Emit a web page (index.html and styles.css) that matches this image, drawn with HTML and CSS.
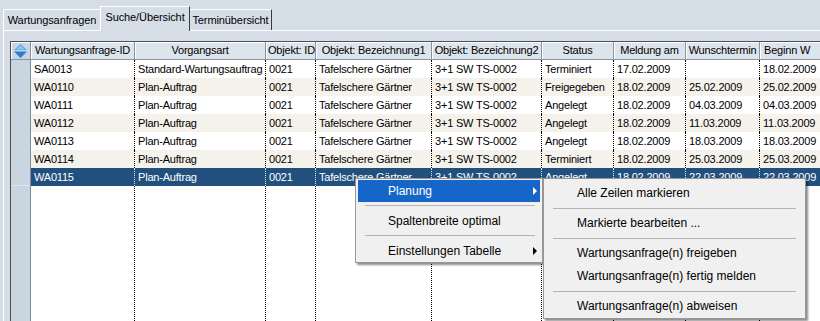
FILE: index.html
```html
<!DOCTYPE html>
<html lang="de">
<head>
  <meta charset="UTF-8" />
  <title>Wartungsanfragen - Suche/Übersicht</title>
  <link rel="stylesheet" href="styles.css">
</head>
<body>
  <div class="tabs">
    <div class="tab tab-first">Wartungsanfragen</div>
    <div class="tab tab-active">Suche/Übersicht</div>
    <div class="tab tab-last">Terminübersicht</div>
  </div>

  <div class="panel">
    <div class="table">
      <div class="row head">
        <div class="cell gutter corner">
          <svg width="13" height="14" viewBox="0 0 13 14">
            <polygon points="6.5,0 13,6 0,6" fill="#5aa8f0"/>
            <polygon points="0,7.5 13,7.5 6.5,14" fill="#2d7bd4"/>
            <polygon points="6.5,1.5 10.5,5.2 2.5,5.2" fill="#8cc6f7"/>
          </svg>
        </div>
        <div class="cell">Wartungsanfrage-ID</div>
        <div class="cell">Vorgangsart</div>
        <div class="cell">Objekt: ID</div>
        <div class="cell">Objekt: Bezeichnung1</div>
        <div class="cell">Objekt: Bezeichnung2</div>
        <div class="cell">Status</div>
        <div class="cell">Meldung am</div>
        <div class="cell">Wunschtermin</div>
        <div class="cell left">Beginn W</div>
      </div>

      <div class="row">
        <div class="cell gutter"></div>
        <div class="cell">SA0013</div>
        <div class="cell">Standard-Wartungsauftrag</div>
        <div class="cell">0021</div>
        <div class="cell">Tafelschere Gärtner</div>
        <div class="cell">3+1 SW TS-0002</div>
        <div class="cell">Terminiert</div>
        <div class="cell">17.02.2009</div>
        <div class="cell"></div>
        <div class="cell">18.02.2009</div>
      </div>
      <div class="row alt">
        <div class="cell gutter"></div>
        <div class="cell">WA0110</div>
        <div class="cell">Plan-Auftrag</div>
        <div class="cell">0021</div>
        <div class="cell">Tafelschere Gärtner</div>
        <div class="cell">3+1 SW TS-0002</div>
        <div class="cell">Freigegeben</div>
        <div class="cell">18.02.2009</div>
        <div class="cell">25.02.2009</div>
        <div class="cell">25.02.2009</div>
      </div>
      <div class="row">
        <div class="cell gutter"></div>
        <div class="cell">WA0111</div>
        <div class="cell">Plan-Auftrag</div>
        <div class="cell">0021</div>
        <div class="cell">Tafelschere Gärtner</div>
        <div class="cell">3+1 SW TS-0002</div>
        <div class="cell">Angelegt</div>
        <div class="cell">18.02.2009</div>
        <div class="cell">04.03.2009</div>
        <div class="cell">04.03.2009</div>
      </div>
      <div class="row alt">
        <div class="cell gutter"></div>
        <div class="cell">WA0112</div>
        <div class="cell">Plan-Auftrag</div>
        <div class="cell">0021</div>
        <div class="cell">Tafelschere Gärtner</div>
        <div class="cell">3+1 SW TS-0002</div>
        <div class="cell">Angelegt</div>
        <div class="cell">18.02.2009</div>
        <div class="cell">11.03.2009</div>
        <div class="cell">11.03.2009</div>
      </div>
      <div class="row">
        <div class="cell gutter"></div>
        <div class="cell">WA0113</div>
        <div class="cell">Plan-Auftrag</div>
        <div class="cell">0021</div>
        <div class="cell">Tafelschere Gärtner</div>
        <div class="cell">3+1 SW TS-0002</div>
        <div class="cell">Angelegt</div>
        <div class="cell">18.02.2009</div>
        <div class="cell">18.03.2009</div>
        <div class="cell">18.03.2009</div>
      </div>
      <div class="row alt">
        <div class="cell gutter"></div>
        <div class="cell">WA0114</div>
        <div class="cell">Plan-Auftrag</div>
        <div class="cell">0021</div>
        <div class="cell">Tafelschere Gärtner</div>
        <div class="cell">3+1 SW TS-0002</div>
        <div class="cell">Terminiert</div>
        <div class="cell">18.02.2009</div>
        <div class="cell">25.03.2009</div>
        <div class="cell">25.03.2009</div>
      </div>
      <div class="row selected">
        <div class="cell gutter"></div>
        <div class="cell">WA0115</div>
        <div class="cell">Plan-Auftrag</div>
        <div class="cell">0021</div>
        <div class="cell">Tafelschere Gärtner</div>
        <div class="cell">3+1 SW TS-0002</div>
        <div class="cell">Angelegt</div>
        <div class="cell">18.02.2009</div>
        <div class="cell">22.03.2009</div>
        <div class="cell">22.03.2009</div>
      </div>

      <!-- empty space below the last row keeps the column lines -->
      <div class="row filler">
        <div class="cell gutter"></div>
        <div class="cell"></div>
        <div class="cell"></div>
        <div class="cell"></div>
        <div class="cell"></div>
        <div class="cell"></div>
        <div class="cell"></div>
        <div class="cell"></div>
        <div class="cell"></div>
        <div class="cell"></div>
      </div>
    </div>
  </div>

  <div class="menu menu-main">
    <div class="item active">Planung<span class="arrow"></span></div>
    <div class="sep"></div>
    <div class="item">Spaltenbreite optimal</div>
    <div class="sep"></div>
    <div class="item">Einstellungen Tabelle<span class="arrow"></span></div>
  </div>

  <div class="menu menu-sub">
    <div class="item">Alle Zeilen markieren</div>
    <div class="sep"></div>
    <div class="item">Markierte bearbeiten ...</div>
    <div class="sep"></div>
    <div class="item">Wartungsanfrage(n) freigeben</div>
    <div class="item">Wartungsanfrage(n) fertig melden</div>
    <div class="sep"></div>
    <div class="item">Wartungsanfrage(n) abweisen</div>
  </div>
</body>
</html>
```

FILE: styles.css
```css
* {
  box-sizing: border-box;
}
body {
  margin: 0;
  width: 820px;
  height: 321px;
  overflow: hidden;
  display: flex;
  flex-direction: column;
  background: #d5dee7;
  font-family: "Liberation Sans", Arial, sans-serif;
  font-size: 11px;
  color: #000;
}

/* tabs */
.tabs {
  display: flex;
  align-items: flex-end;
  height: 30px;
  padding-left: 3px;
  flex: none;
  letter-spacing: -0.1px;
}
.tab {
  height: 21px;
  line-height: 20px;
  text-align: center;
  white-space: nowrap;
  border-top: 1px solid #fff;
  border-left: 1px solid #fff;
  border-right: 1px solid #3c3c3c;
  background: #d5dee7;
}
.tab-first {
  width: 97px;
  border-right: none;
}
.tab-active {
  width: 90px;
  height: 25px;
  line-height: 21px;
  margin-bottom: -1px;
  position: relative;
  z-index: 1;
}
.tab-last {
  width: 82px;
  border-left: none;
}

/* panel + table */
.panel {
  flex: 1;
  min-height: 0;
  display: flex;
  margin-left: 3px;
  padding: 10px 0 0 6px;
  border-top: 1px solid #fff;
  border-left: 1px solid #fff;
}
.table {
  flex: 1;
  min-width: 0;
  display: flex;
  flex-direction: column;
  overflow: hidden;
  background: #fff;
  border-top: 1px solid #4e4e4e;
  border-left: 1px solid #4e4e4e;
  letter-spacing: -0.2px;
}
.row {
  flex: none;
  display: grid;
  grid-template-columns: 20px 104px 131px 50px 116px 110px 72px 72px 74px 61px;
  height: 18px;
}
.cell {
  padding: 0 3px;
  line-height: 18px;
  white-space: nowrap;
  overflow: hidden;
  border-right: 1px dotted #000;
}
.row .cell:last-child {
  border-right: none;
}
.gutter {
  background: #c9d5e0;
  border-right: 1px solid #7f8b96;
}
.row.alt {
  background: #f5f2ec;
}
.row.selected {
  background: #22507e;
  color: #fff;
}
.row.selected .cell {
  border-right-color: #e6e6e6;
}
.row.selected .gutter {
  border-right: 1px solid #7f8b96;
  box-shadow: inset 0 -1px 0 #dbe6f0;
}
.row.filler {
  flex: 1;
  height: auto;
}

.head .cell {
  background: #dce4ec;
  text-align: center;
  line-height: 17px;
  padding: 0 2px;
  border-right: 1px solid #8994a0;
  border-bottom: 1px solid #8994a0;
  box-shadow: inset 1px 1px 0 #fff;
}
.head .cell.left {
  text-align: left;
  padding-left: 4px;
}
.head .corner {
  background: #c9d5e0;
  display: flex;
  align-items: center;
  justify-content: center;
}

/* context menus */
.menu {
  position: absolute;
  background: #f0f0f0;
  border: 1px solid #979797;
  box-shadow: 2px 2px 2px rgba(0, 0, 0, 0.45);
  font-size: 12px;
}
.menu-main {
  left: 355px;
  top: 178px;
  width: 188px;
  padding: 1px 2px 0;
  z-index: 2;
}
.menu-sub {
  left: 543px;
  top: 178px;
  width: 263px;
  padding: 3px 2px 0;
  z-index: 3;
}
.item {
  position: relative;
  height: 22px;
  line-height: 22px;
  padding-left: 30px;
  white-space: nowrap;
}
.menu-sub .item {
  height: 23px;
  line-height: 23px;
  padding-left: 31px;
}
.item.active {
  background: #1666c9;
  color: #fff;
}
.arrow {
  position: absolute;
  right: 3px;
  top: 7px;
  border-left: 4px solid #000;
  border-top: 4px solid transparent;
  border-bottom: 4px solid transparent;
}
.item.active .arrow {
  border-left-color: #fff;
}
.sep {
  height: 8px;
  margin: 0 5px 0 7px;
  padding-top: 3px;
}
.sep::after {
  content: "";
  display: block;
  border-top: 1px solid #b4b4b4;
}
.menu-sub .sep {
  height: 7px;
  margin: 0 7px;
}
```
